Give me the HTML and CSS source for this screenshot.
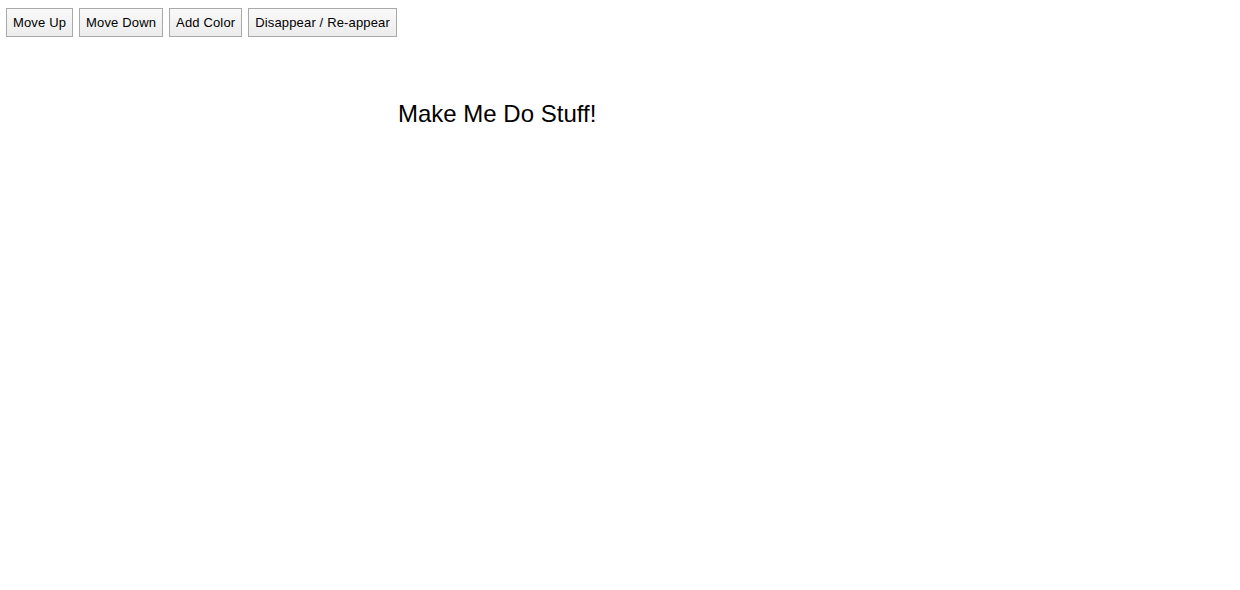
FILE: index.html
```html
<!DOCTYPE html>
<html>
<head>
<meta charset="utf-8">
<link rel="stylesheet" href="styles.css">
</head>
<body>
<div class="toolbar">
  <button class="btn">Move Up</button>
  <button class="btn">Move Down</button>
  <button class="btn">Add Color</button>
  <button class="btn">Disappear / Re-appear</button>
</div>
<div class="stage">
  <div class="box">Make Me Do Stuff!</div>
</div>
</body>
</html>
```
FILE: styles.css
```css
html, body {
  margin: 0;
  padding: 0;
  background: #fff;
  font-family: "Liberation Sans", Arial, sans-serif;
}
.toolbar {
  display: flex;
  gap: 6px;
  padding: 8px 0 0 6px;
}
.btn {
  font-family: "Liberation Sans", Arial, sans-serif;
  font-size: 13px;
  letter-spacing: 0.15px;
  color: #000;
  height: 29px;
  padding: 0 6px;
  border: 1px solid #a9a9a9;
  border-radius: 0;
  background: linear-gradient(#f9f9f9, #ececec);
}
.stage {
  padding: 63px 0 0 398px;
}
.box {
  font-size: 24px;
  color: #000;
}
```
